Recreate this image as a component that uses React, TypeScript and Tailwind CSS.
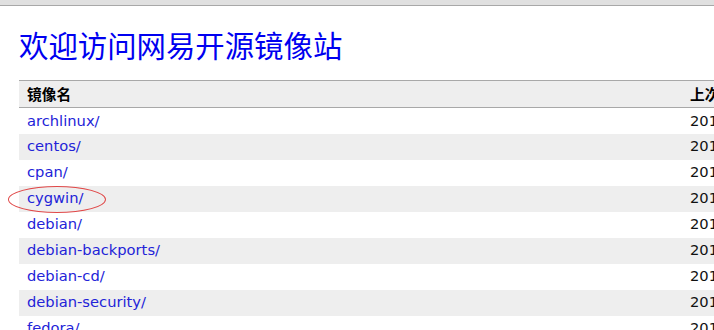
import React from 'react';

const mirrors = [
  'archlinux/',
  'centos/',
  'cpan/',
  'cygwin/',
  'debian/',
  'debian-backports/',
  'debian-cd/',
  'debian-security/',
  'fedora/',
];

const updated = [
  '2017-03-08 09:02',
  '2017-03-08 08:40',
  '2017-03-08 09:10',
  '2017-03-08 07:55',
  '2017-03-08 08:20',
  '2017-03-08 08:20',
  '2017-03-06 21:14',
  '2017-03-08 09:01',
  '2017-03-08 06:33',
];

export default function App() {
  return (
    <div className="relative w-[714px] h-[330px] overflow-hidden bg-white">
      {/* 浏览器顶部条 */}
      <div className="h-[6px] bg-[#e0e0e0] border-b border-[#a8a8a8]" />

      <div className="pl-[19px]">
        <h1
          className="mt-[23px] h-[31px] text-[29.4px] leading-[31px] text-[#0000f0] whitespace-nowrap"
          style={{ fontFamily: '"Noto Sans CJK SC", sans-serif', fontWeight: 400 }}
        >
          欢迎访问网易开源镜像站
        </h1>

        <table
          className="mt-[20px] w-[900px] border-collapse text-[14.7px]"
          style={{ fontFamily: '"DejaVu Sans", Verdana, sans-serif' }}
        >
          <thead>
            <tr className="bg-[#eeeeee] border-y border-[#a8a8a8] h-[27px]">
              <th
                className="w-[663px] pl-[8px] text-left font-bold text-black"
                style={{ fontFamily: '"Noto Sans CJK SC", sans-serif' }}
              >
                镜像名
              </th>
              <th
                className="pl-[8px] text-left font-bold text-black whitespace-nowrap"
                style={{ fontFamily: '"Noto Sans CJK SC", sans-serif' }}
              >
                上次更新时间
              </th>
            </tr>
          </thead>
          <tbody>
            {mirrors.map((m, i) => (
              <tr key={m} className={`h-[26px] ${i % 2 === 1 ? 'bg-[#eeeeee]' : 'bg-white'}`}>
                <td className="pl-[8px] p-0">
                  <a href="#" className="text-[#2323d8]">
                    {m}
                  </a>
                </td>
                <td className="pl-[8px] p-0 text-[#111] whitespace-nowrap">{updated[i]}</td>
              </tr>
            ))}
          </tbody>
        </table>
      </div>

      {/* 红色圈注 */}
      <div className="absolute left-[8px] top-[186px] w-[98px] h-[27px] rounded-[50%] border border-[#e04848]" />
    </div>
  );
}
